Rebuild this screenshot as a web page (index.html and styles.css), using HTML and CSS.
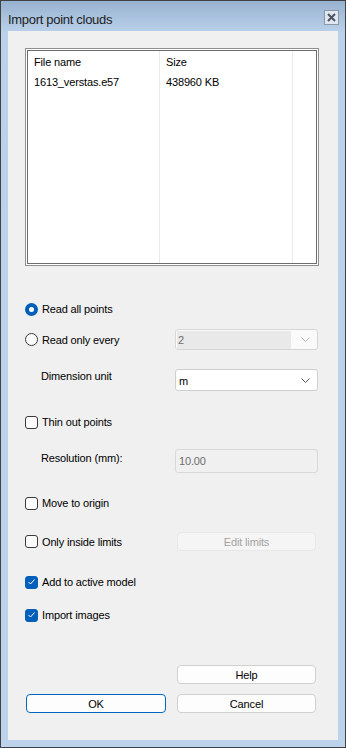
FILE: index.html
```html
<!DOCTYPE html>
<html lang="en">
<head>
  <meta charset="UTF-8" />
  <meta name="viewport" content="width=device-width, initial-scale=1.0" />
  <title>Import point clouds</title>
  <link rel="stylesheet" href="styles.css">
</head>
<body>
  <div class="window">
    <div class="titlebar">
      <span class="title">Import point clouds</span>
      <span class="close-btn">
        <svg width="9" height="9" viewBox="0 0 9 9"><path d="M1 1 L8 8 M8 1 L1 8" stroke="#4d5360" stroke-width="2"/></svg>
      </span>
    </div>
    <div class="client">
      <!-- File list -->
      <div class="listbox">
        <div class="list-inner">
          <div class="col col-name">
            <div class="cell head">File name</div>
            <div class="cell">1613_verstas.e57</div>
          </div>
          <div class="col col-size">
            <div class="cell head">Size</div>
            <div class="cell">438960 KB</div>
          </div>
          <div class="col col-extra"></div>
        </div>
      </div>

      <div class="row row-all">
        <span class="radio checked"></span>
        <span class="label">Read all points</span>
      </div>

      <div class="row row-every">
        <span class="radio"></span>
        <span class="label grow">Read only every</span>
        <div class="combo disabled">
          <span class="combo-value">2</span>
          <svg class="chev" width="9" height="5" viewBox="0 0 9 5"><path d="M0.5 0.5 L4.5 4.5 L8.5 0.5" fill="none" stroke="#b5b5b5"/></svg>
        </div>
      </div>

      <div class="row row-unit top">
        <span class="label sub grow">Dimension unit</span>
        <div class="combo">
          <span class="combo-value">m</span>
          <svg class="chev" width="9" height="5" viewBox="0 0 9 5"><path d="M0.5 0.5 L4.5 4.5 L8.5 0.5" fill="none" stroke="#555"/></svg>
        </div>
      </div>

      <div class="row row-thin">
        <span class="check"></span>
        <span class="label">Thin out points</span>
      </div>

      <div class="row row-res top">
        <span class="label sub tall grow">Resolution (mm):</span>
        <div class="field disabled">10.00</div>
      </div>

      <div class="row row-origin">
        <span class="check"></span>
        <span class="label">Move to origin</span>
      </div>

      <div class="row row-limits">
        <span class="check"></span>
        <span class="label grow">Only inside limits</span>
        <span class="btn btn-disabled">Edit limits</span>
      </div>

      <div class="row row-add">
        <span class="check checked">
          <svg width="9" height="8" viewBox="0 0 9 8"><path d="M1.5 4 L3.5 6 L7.5 1.5" fill="none" stroke="#fff" stroke-width="1"/></svg>
        </span>
        <span class="label">Add to active model</span>
      </div>

      <div class="row row-images">
        <span class="check checked">
          <svg width="9" height="8" viewBox="0 0 9 8"><path d="M1.5 4 L3.5 6 L7.5 1.5" fill="none" stroke="#fff" stroke-width="1"/></svg>
        </span>
        <span class="label">Import images</span>
      </div>

      <div class="btn-row row-help">
        <span class="btn">Help</span>
      </div>
      <div class="btn-row row-ok">
        <span class="btn btn-default">OK</span>
        <span class="btn">Cancel</span>
      </div>
    </div>
  </div>
</body>
</html>
```

FILE: styles.css
```css
/* Dialog window */
body {
  margin: 0;
  padding: 0;
  width: 346px;
  height: 748px;
  overflow: hidden;
  font-family: "Liberation Sans", Arial, sans-serif;
  font-size: 11px;
  letter-spacing: -0.15px;
  color: #000;
}
.window {
  box-sizing: border-box;
  width: 346px;
  height: 748px;
  border: 1px solid #424242;
  background: linear-gradient(#97b2d0, #bcd2eb 32px, #bdd3ec);
  padding: 0 7px 7px 7px;
  display: flex;
  flex-direction: column;
}
.titlebar {
  height: 30px;
  display: flex;
  align-items: center;
  justify-content: space-between;
  flex-shrink: 0;
}
.title {
  font-size: 13px;
  letter-spacing: -0.3px;
  color: #1c1c1c;
  padding-top: 6px;
}
.close-btn {
  box-sizing: border-box;
  width: 15px;
  height: 15px;
  margin-top: 2px;
  margin-right: -1px;
  border: 1px solid #8d96a3;
  background: #dfe7f1;
  display: flex;
  align-items: center;
  justify-content: center;
}
.client {
  flex: 1;
  background: #f0f0f0;
  padding-left: 17px;
  padding-top: 17px;
  box-sizing: border-box;
}

/* File list */
.listbox {
  box-sizing: border-box;
  width: 294px;
  height: 218px;
  border: 1px solid #8f8f8f;
  padding: 1px;
  background: #fff;
}
.list-inner {
  box-sizing: border-box;
  height: 100%;
  border: 1px solid #6e6e6e;
  display: flex;
}
.col {
  border-right: 1px solid #e6ebf2;
  height: 100%;
}
.col-name { width: 131px; }
.col-size { width: 132px; }
.col-extra { flex: 1; border-right: none; }
.cell {
  height: 20px;
  line-height: 20px;
  padding-left: 6px;
  white-space: nowrap;
}
.cell.head {
  height: 21px;
  line-height: 22px;
}

/* Form rows */
.row {
  display: flex;
  align-items: center;
  width: 293px;
}
.row.top { align-items: flex-start; }
.grow { flex: 1; }
.label { white-space: nowrap; }
.label.sub { padding-left: 16px; line-height: 14px; }
.label.tall { line-height: 18px; }

.row-all { height: 18px; margin-top: 34px; }
.row-every { height: 21px; margin-top: 11px; }
.row-unit { height: 22px; margin-top: 19px; }
.row-thin { height: 18px; margin-top: 22px; }
.row-res { height: 24px; margin-top: 18px; }
.row-origin { height: 18px; margin-top: 21px; }
.row-limits { height: 21px; margin-top: 19px; }
.row-add { height: 18px; margin-top: 21px; }
.row-images { height: 18px; margin-top: 15px; }

.radio, .check {
  box-sizing: border-box;
  width: 12px;
  height: 12px;
  border: 1px solid #3a3a3a;
  margin-right: 4px;
  flex-shrink: 0;
  background: #fbfbfb;
}
.radio {
  width: 13px;
  height: 13px;
  border-radius: 50%;
}
.radio.checked {
  border: 4px solid #005fb8;
  background: #fff;
}
.check {
  width: 13px;
  height: 13px;
  border-radius: 3px;
  display: flex;
  align-items: center;
  justify-content: center;
}
.check.checked {
  background: #005fb8;
  border-color: #005fb8;
}

/* Combos and fields */
.combo, .field {
  box-sizing: border-box;
  width: 143px;
  height: 22px;
  border: 1px solid #cfcfcf;
  border-radius: 3px;
  background: #fff;
  display: flex;
  align-items: center;
  padding-left: 3px;
  padding-right: 7px;
}
.combo-value {
  flex: 1;
  line-height: 18px;
  padding-top: 2px;
}
.combo.disabled {
  height: 21px;
  background: #fafafa;
  border-color: #d6d6d6;
}
.combo.disabled .combo-value {
  background: #e9e9e9;
  color: #6d6d6d;
  margin-right: 10px;
  padding-left: 1px;
  margin-left: -2px;
  padding-top: 0;
}
.field {
  height: 24px;
  color: #6d6d6d;
  padding-left: 3px;
}
.field.disabled {
  background: #f0f0f0;
  border-color: #d9d9d9;
}

/* Buttons */
.btn {
  box-sizing: border-box;
  width: 139px;
  height: 19px;
  border: 1px solid #d0d0d0;
  border-radius: 4px;
  background: #fdfdfd;
  display: flex;
  align-items: center;
  justify-content: center;
  color: #000;
}
.btn-disabled {
  background: #f5f5f5;
  border-color: #e8e8e8;
  color: #a3a3a3;
  margin-right: 2px;
}
.btn-default {
  border-color: #0067c0;
  width: 140px;
  margin-left: 1px;
}
.btn-row {
  display: flex;
  justify-content: space-between;
  width: 291px;
}
.row-help { margin-top: 41px; justify-content: flex-end; }
.row-ok { margin-top: 10px; }
```
